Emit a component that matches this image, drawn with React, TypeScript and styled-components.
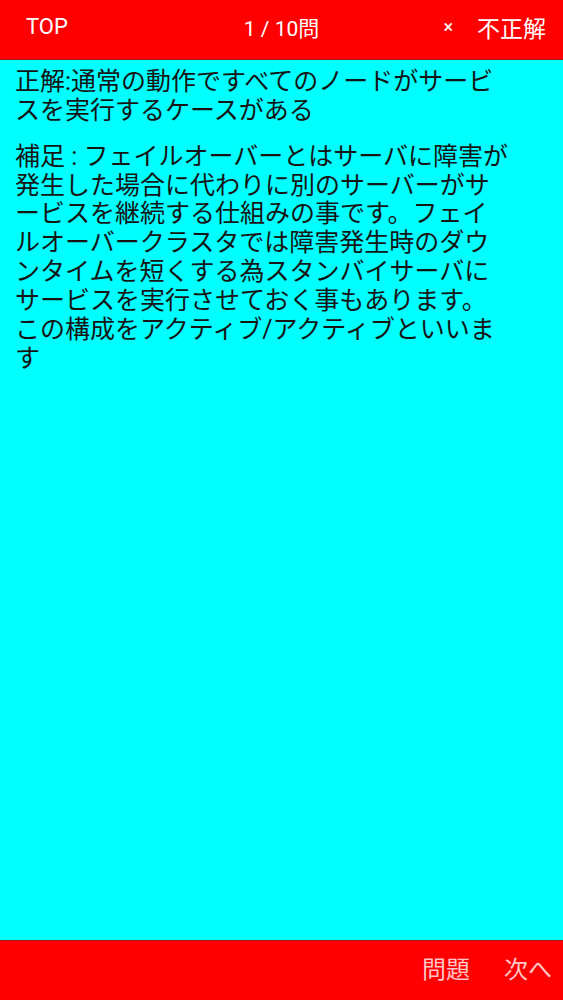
import React from "react";
import styled, { createGlobalStyle } from "styled-components";

const GlobalStyle = createGlobalStyle`
  html, body {
    margin: 0;
    padding: 0;
    height: 100%;
  }
  body {
    font-family: Roboto, "Noto Sans CJK JP", sans-serif;
    background: #00ffff;
  }
  #root {
    height: 100%;
  }
`;

const Screen = styled.div`
  display: flex;
  flex-direction: column;
  height: 1000px;
  width: 563px;
  background: #00ffff;
`;

const Bar = styled.div<{ $top?: boolean }>`
  height: 60px;
  flex: 0 0 60px;
  box-sizing: border-box;
  background: #ff0000;
  display: flex;
  align-items: center;
  ${(p) =>
    p.$top
      ? `border-bottom: 1px solid rgba(80, 40, 40, 0.55);`
      : `border-top: 1px solid rgba(80, 40, 40, 0.55);`}
`;

const Header = styled(Bar)`
  display: grid;
  grid-template-columns: 1fr auto 1fr;
  padding: 0 17px 6px 17px;
`;

const HeaderText = styled.span<{ $size?: number; $indent?: number }>`
  color: #ffffff;
  font-size: ${(p) => p.$size ?? 21}px;
  margin-left: ${(p) => p.$indent ?? 0}px;
  white-space: nowrap;
`;

const Right = styled.div`
  display: flex;
  justify-content: flex-end;
  align-items: center;
  gap: 24px;
`;

const Cross = styled.span`
  color: #ffffff;
  font-size: 18px;
`;

const Body = styled.main`
  flex: 1;
  padding: 8px 0 0 15px;
  color: #151515;
  font-size: 25px;
  line-height: 28.85px;
`;

const Para = styled.p`
  margin: 0 0 17px;
`;

const Line = styled.span`
  display: block;
  white-space: nowrap;
`;

const Footer = styled(Bar)`
  justify-content: flex-end;
  gap: 34px;
  padding: 0 11px 6px 0;
`;

const FooterButton = styled.span`
  color: rgba(255, 255, 255, 0.78);
  font-size: 24px;
`;

const answer = [
  "正解:通常の動作ですべてのノードがサービ",
  "スを実行するケースがある",
];

const note = [
  "補足 : フェイルオーバーとはサーバに障害が",
  "発生した場合に代わりに別のサーバーがサ",
  "ービスを継続する仕組みの事です。フェイ",
  "ルオーバークラスタでは障害発生時のダウ",
  "ンタイムを短くする為スタンバイサーバに",
  "サービスを実行させておく事もあります。",
  "この構成をアクティブ/アクティブといいま",
  "す",
];

export default function App() {
  return (
    <>
      <GlobalStyle />
      <Screen>
        <Header $top>
          <HeaderText $size={22} $indent={9}>TOP</HeaderText>
          <HeaderText>1 / 10問</HeaderText>
          <Right>
            <Cross>×</Cross>
            <HeaderText $size={23}>不正解</HeaderText>
          </Right>
        </Header>
        <Body>
          <Para>
            {answer.map((l, i) => (
              <Line key={i}>{l}</Line>
            ))}
          </Para>
          <Para>
            {note.map((l, i) => (
              <Line key={i}>{l}</Line>
            ))}
          </Para>
        </Body>
        <Footer>
          <FooterButton>問題</FooterButton>
          <FooterButton>次へ</FooterButton>
        </Footer>
      </Screen>
    </>
  );
}
